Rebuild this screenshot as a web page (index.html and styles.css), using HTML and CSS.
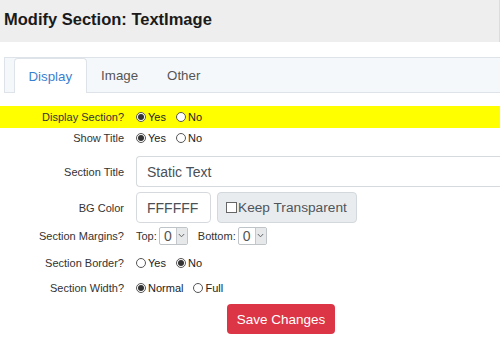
FILE: index.html
```html
<!DOCTYPE html>
<html>
<head>
<meta charset="utf-8">
<link rel="stylesheet" href="styles.css">
</head>
<body>
<div class="header"><h1>Modify Section: TextImage</h1></div>
<div class="tabs">
  <span class="tab active">Display</span>
  <span class="tab">Image</span>
  <span class="tab">Other</span>
</div>
<form class="form">
  <div class="row hl r-radio">
    <label class="lbl">Display Section?</label>
    <div class="ctl"><span class="opt"><span class="radio on"></span>Yes</span><span class="opt"><span class="radio"></span>No</span></div>
  </div>
  <div class="row r-show">
    <label class="lbl">Show Title</label>
    <div class="ctl"><span class="opt"><span class="radio on"></span>Yes</span><span class="opt"><span class="radio"></span>No</span></div>
  </div>
  <div class="row r-title">
    <label class="lbl">Section Title</label>
    <div class="ctl"><span class="input wide">Static Text</span></div>
  </div>
  <div class="row r-bg">
    <label class="lbl">BG Color</label>
    <div class="ctl"><span class="input color">FFFFFF</span><span class="btn-gray"><span class="check"></span>Keep Transparent</span></div>
  </div>
  <div class="row r-margin">
    <label class="lbl">Section Margins?</label>
    <div class="ctl small">
      <span>Top:</span><span class="select"><span class="val">0</span><span class="arrow"><svg width="7" height="5" viewBox="0 0 7 5"><path d="M0.8 1 L3.5 3.8 L6.2 1" fill="none" stroke="#666" stroke-width="1"/></svg></span></span>
      <span class="blabel">Bottom:</span><span class="select"><span class="val">0</span><span class="arrow"><svg width="7" height="5" viewBox="0 0 7 5"><path d="M0.8 1 L3.5 3.8 L6.2 1" fill="none" stroke="#666" stroke-width="1"/></svg></span></span>
    </div>
  </div>
  <div class="row r-border">
    <label class="lbl">Section Border?</label>
    <div class="ctl"><span class="opt"><span class="radio"></span>Yes</span><span class="opt"><span class="radio on"></span>No</span></div>
  </div>
  <div class="row r-width">
    <label class="lbl">Section Width?</label>
    <div class="ctl"><span class="opt"><span class="radio on"></span>Normal</span><span class="opt"><span class="radio"></span>Full</span></div>
  </div>
  <div class="actions"><span class="btn-save">Save Changes</span></div>
</form>
</body>
</html>
```
FILE: styles.css
```css
html, body { margin: 0; padding: 0; background: #fff; }
body { font-family: "Liberation Sans", Arial, sans-serif; color: #222; width: 500px; height: 341px; overflow: hidden; }

.header { background: #eeeeee; height: 42px; display: flex; align-items: center; padding-left: 4px; border-right: 1px solid #dcdcdc; box-sizing: border-box; }
.header h1 { margin: 0; font-size: 16.5px; font-weight: bold; color: #1a1a1a; line-height: 1; position: relative; top: -2px; }

.tabs { margin: 15px 0 0 4px; height: 36px; box-sizing: border-box; border: 1px solid #dde3e8; border-right: none; background: #f5f8fb; display: flex; align-items: flex-end; padding-left: 9px; }
.tab { height: 34px; box-sizing: border-box; padding: 0 13.5px; display: flex; align-items: center; font-size: 13.3px; color: #555; border: 1px solid transparent; border-bottom: none; }
.tab.active { background: #fff; border-color: #dde3e8; border-radius: 4px 4px 0 0; color: #3a7fd0; height: 35px; margin-bottom: -1px; }

.form { margin-top: 13px; }
.row { display: flex; align-items: center; }
.lbl { width: 136px; text-align: right; font-size: 11px; color: #333; padding-right: 12px; box-sizing: border-box; flex: none; }
.ctl { display: flex; align-items: center; font-size: 11px; color: #222; }
.hl { background: #ffff00; }
.r-radio { height: 22px; }
.r-show { height: 19px; }
.r-title { margin-top: 9px; }
.r-bg { margin-top: 5px; }
.r-margin { margin-top: 3px; height: 19px; }
.r-border { margin-top: 8px; height: 20px; }
.r-width { margin-top: 5px; height: 20px; }

.opt { display: inline-flex; align-items: center; margin-right: 10px; }
.radio { width: 10px; height: 10px; box-sizing: border-box; border: 1px solid #555; border-radius: 50%; margin-right: 2px; display: inline-flex; align-items: center; justify-content: center; background: #fff; }
.radio.on::after { content: ""; width: 6px; height: 6px; border-radius: 50%; background: #333; }

.input { height: 31px; box-sizing: border-box; border: 1px solid #d6dade; border-radius: 4px; background: #fff; font-size: 14px; color: #4a5056; display: flex; align-items: center; padding-left: 10px; }
.input.wide { width: 370px; border-right: none; border-radius: 4px 0 0 4px; }
.input.color { width: 75px; }
.btn-gray { margin-left: 6px; height: 31px; box-sizing: border-box; width: 140px; border: 1px solid #d3d8dd; border-radius: 4px; background: #e9ecef; font-size: 13.7px; color: #4f555b; display: flex; align-items: center; padding-left: 8px; }
.check { width: 9px; height: 9px; border: 1px solid #666; background: #fff; margin-right: 1px; }

.small { font-size: 11px; color: #333; }
.select { display: inline-flex; height: 18px; box-sizing: border-box; border: 1px solid #bfc4c8; border-radius: 2px; margin-left: 2px; background: #fff; }
.select .val { width: 16px; font-size: 14px; color: #555; display: flex; align-items: center; justify-content: center; }
.select .arrow { width: 10px; background: #e6e8ea; border-left: 1px solid #c4c8cc; display: flex; align-items: center; justify-content: center; }
.blabel { margin-left: 10px; }

.actions { margin-top: 6px; padding-left: 227px; }
.btn-save { display: inline-flex; width: 108px; height: 30px; box-sizing: border-box; align-items: center; justify-content: center; background: #dc3545; color: #fff; border-radius: 4px; font-size: 13.5px; }
```
